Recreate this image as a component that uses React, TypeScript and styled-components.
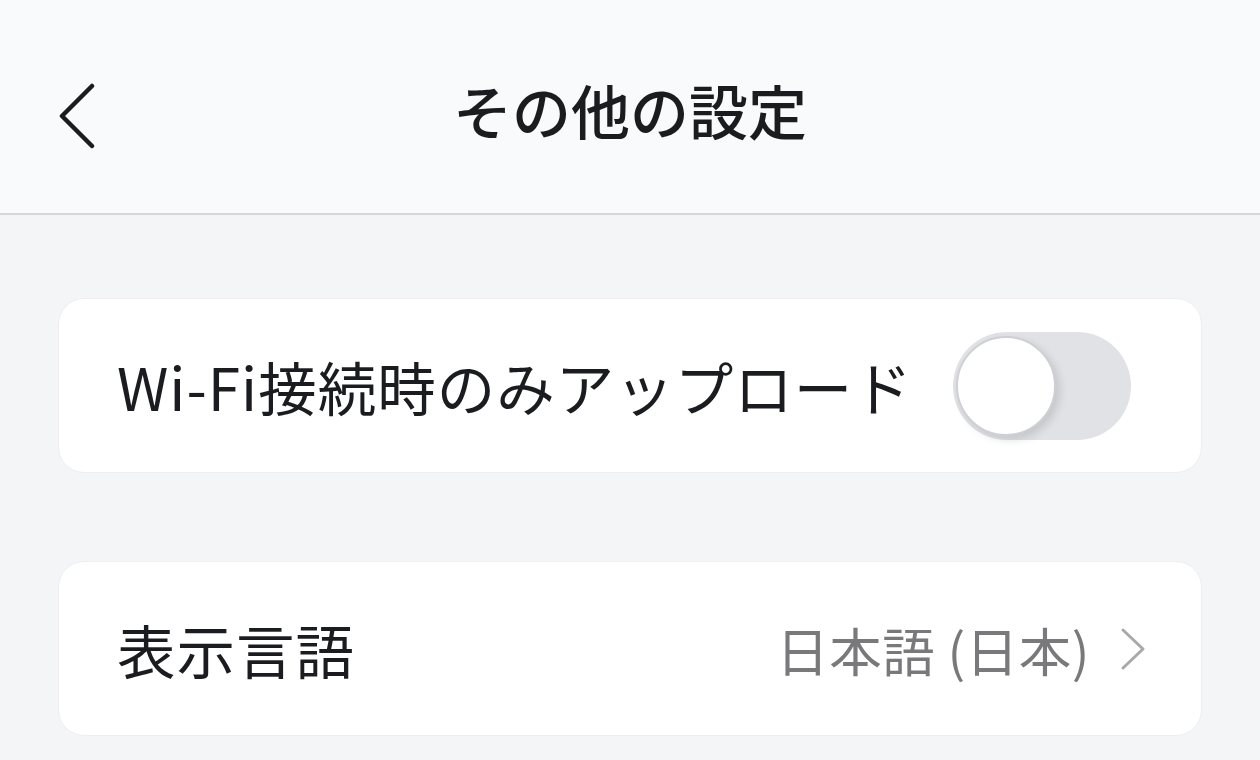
import React, { useState } from 'react';
import styled, { createGlobalStyle } from 'styled-components';

const GlobalStyle = createGlobalStyle`
	html, body {
		margin: 0;
		padding: 0;
		background: #f4f5f7;
	}
	body {
		font-family: 'Noto Sans CJK JP', 'Noto Sans', sans-serif;
		color: #1b1c1f;
	}
`;

const Page = styled.div`
	width: 1260px;
	height: 760px;
	overflow: hidden;
	background: #f4f5f7;
`;

const Header = styled.header`
	height: 215px;
	box-sizing: border-box;
	background: #f9fafc;
	border-bottom: 2px solid #d6d7da;
	display: flex;
	align-items: center;
	justify-content: center;
	position: relative;
`;

const BackButton = styled.button`
	position: absolute;
	left: 52px;
	top: 77px;
	width: 52px;
	height: 78px;
	border: none;
	background: transparent;
	padding: 0;
	display: flex;
	align-items: center;
	justify-content: center;
	cursor: pointer;
`;

const Title = styled.h1`
	margin: 0;
	margin-top: 6px;
	font-size: 59px;
	font-weight: 500;
	color: #1b1c1f;
`;

const Content = styled.main`
	padding: 83px 58px 0;
	display: flex;
	flex-direction: column;
	gap: 88px;
`;

const Card = styled.div<{ $right: number }>`
	height: 175px;
	box-sizing: border-box;
	background: #ffffff;
	border: 1px solid #eceef1;
	border-radius: 26px;
	display: flex;
	align-items: center;
	justify-content: space-between;
	padding: 0 ${(p) => p.$right}px 0 58px;
`;

const Label = styled.span`
	font-size: 58.5px;
	font-weight: 400;
	letter-spacing: 1px;
	color: #1b1c1f;
`;

const Value = styled.div`
	display: flex;
	align-items: center;
	gap: 30px;
	font-size: 52.5px;
	letter-spacing: 0.5px;
	color: #79797b;
`;

const Track = styled.button<{ $on: boolean }>`
	width: 178px;
	height: 108px;
	border-radius: 54px;
	border: none;
	padding: 0;
	background: ${(p) => (p.$on ? '#3a7cf6' : '#e1e2e5')};
	position: relative;
	cursor: pointer;
`;

const Knob = styled.span<{ $on: boolean }>`
	position: absolute;
	top: 4px;
	left: ${(p) => (p.$on ? '74px' : '3px')};
	width: 100px;
	height: 100px;
	border-radius: 50%;
	background: #ffffff;
	box-sizing: border-box;
	border: 2px solid #cfd0d3;
	box-shadow: 4px 4px 8px rgba(0, 0, 0, 0.12);
	transition: left 0.2s;
`;

export default function App() {
	const [wifiOnly, setWifiOnly] = useState(false);

	return (
		<Page>
			<GlobalStyle />
			<Header>
				<BackButton aria-label="戻る">
					<svg width="40" height="66" viewBox="0 0 40 66" fill="none">
						<path d="M34 3 L4 33 L34 63" stroke="#1b1c1f" strokeWidth="4.5" strokeLinecap="round" strokeLinejoin="round" />
					</svg>
				</BackButton>
				<Title>その他の設定</Title>
			</Header>
			<Content>
				<Card $right={70}>
					<Label>Wi-Fi接続時のみアップロード</Label>
					<Track $on={wifiOnly} onClick={() => setWifiOnly(!wifiOnly)}>
						<Knob $on={wifiOnly} />
					</Track>
				</Card>
				<Card $right={55}>
					<Label>表示言語</Label>
					<Value>
						<span>日本語 (日本)</span>
						<svg width="26" height="44" viewBox="0 0 26 44" fill="none">
							<path d="M3 3 L23 22 L3 41" stroke="#a9a9ab" strokeWidth="3" strokeLinecap="round" strokeLinejoin="round" />
						</svg>
					</Value>
				</Card>
			</Content>
		</Page>
	);
}
